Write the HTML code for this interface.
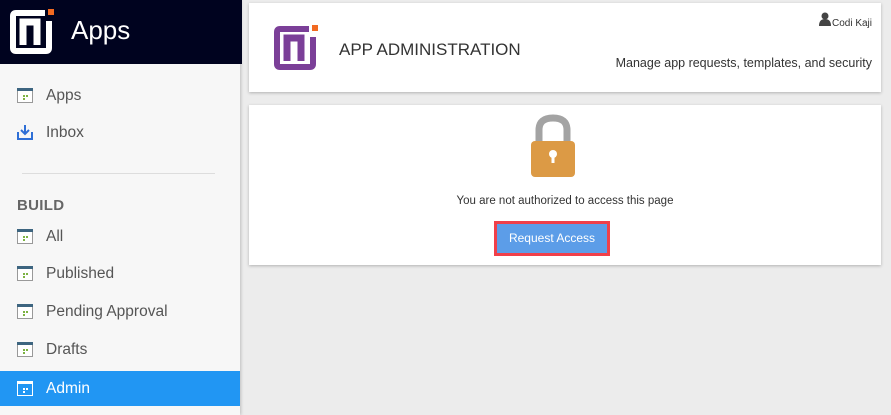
<!DOCTYPE html>
<html><head><meta charset="utf-8"><style>
*{margin:0;padding:0;box-sizing:border-box}
body{width:891px;height:415px;overflow:hidden;background:#ececec;font-family:"Liberation Sans",sans-serif;position:relative}
.side{position:absolute;left:0;top:0;width:240px;height:415px;background:#f7f7f7;box-shadow:1px 0 3px rgba(0,0,0,.2)}
.top{position:absolute;left:0;top:0;width:242px;height:64px;background:#00031f}
.top .t{position:absolute;left:71px;top:15px;color:#fff;font-size:26px}
.item{position:absolute;left:0;width:240px;height:35px;color:#555;font-size:15.5px}
.item span{position:absolute;left:46px;top:9px}
.item svg{position:absolute;left:17px;top:9px}
.sel{background:#2196f3;color:#fff}
.card{position:absolute;left:249px;width:632px;background:#fff;box-shadow:0 1px 3px rgba(0,0,0,.25)}
</style></head><body>
<div class="side">
<div class="top">
<svg width="46" height="48" style="position:absolute;left:8px;top:7px" viewBox="0 0 46 48">
<path d="M37 6 H8 Q5 6 5 9 V41 Q5 44 8 44 H38 Q41 44 41 41 V14" fill="none" stroke="#fff" stroke-width="6"/>
<path d="M15 38 V15 H29 V38" fill="none" stroke="#fff" stroke-width="7"/>
<rect x="40" y="2" width="6" height="6" fill="#f26a21"/>
</svg>
<div class="t">Apps</div></div>
<div class="item" style="top:78px"><svg width="16" height="16"><rect x="0.5" y="1.5" width="15" height="14" fill="#fff" stroke="#999"/><rect x="0" y="1" width="16" height="3" fill="#3d6580"/><rect x="6" y="8" width="2" height="2" fill="#7cb342"/><rect x="9" y="8" width="2" height="2" fill="#7cb342"/><rect x="6" y="11" width="2" height="2" fill="#7cb342"/></svg><span>Apps</span></div>
<div class="item" style="top:115px"><svg width="16" height="16"><path d="M1 8 V15 H15 V8" fill="none" stroke="#2f6fd6" stroke-width="2"/><path d="M8 1 V10 M4 6 L8 10 L12 6" fill="none" stroke="#2f6fd6" stroke-width="2"/></svg><span>Inbox</span></div>
<div style="position:absolute;left:22px;top:173px;width:193px;height:1px;background:#ddd"></div>
<div style="position:absolute;left:17px;top:197px;font-size:15px;color:#666;font-weight:bold;letter-spacing:.3px">BUILD</div>
<div class="item" style="top:219px"><svg width="16" height="16"><rect x="0.5" y="1.5" width="15" height="14" fill="#fff" stroke="#999"/><rect x="0" y="1" width="16" height="3" fill="#3d6580"/><rect x="6" y="8" width="2" height="2" fill="#7cb342"/><rect x="9" y="8" width="2" height="2" fill="#7cb342"/><rect x="6" y="11" width="2" height="2" fill="#7cb342"/></svg><span>All</span></div>
<div class="item" style="top:256px"><svg width="16" height="16"><rect x="0.5" y="1.5" width="15" height="14" fill="#fff" stroke="#999"/><rect x="0" y="1" width="16" height="3" fill="#3d6580"/><rect x="6" y="8" width="2" height="2" fill="#7cb342"/><rect x="9" y="8" width="2" height="2" fill="#7cb342"/><rect x="6" y="11" width="2" height="2" fill="#7cb342"/></svg><span>Published</span></div>
<div class="item" style="top:294px"><svg width="16" height="16"><rect x="0.5" y="1.5" width="15" height="14" fill="#fff" stroke="#999"/><rect x="0" y="1" width="16" height="3" fill="#3d6580"/><rect x="6" y="8" width="2" height="2" fill="#7cb342"/><rect x="9" y="8" width="2" height="2" fill="#7cb342"/><rect x="6" y="11" width="2" height="2" fill="#7cb342"/></svg><span>Pending Approval</span></div>
<div class="item" style="top:332px"><svg width="16" height="16"><rect x="0.5" y="1.5" width="15" height="14" fill="#fff" stroke="#999"/><rect x="0" y="1" width="16" height="3" fill="#3d6580"/><rect x="6" y="8" width="2" height="2" fill="#7cb342"/><rect x="9" y="8" width="2" height="2" fill="#7cb342"/><rect x="6" y="11" width="2" height="2" fill="#7cb342"/></svg><span>Drafts</span></div>
<div class="item sel" style="top:371px"><svg width="16" height="16"><rect x="0.5" y="1.5" width="15" height="14" fill="none" stroke="#fff"/><rect x="0" y="1" width="16" height="3" fill="#fff"/><rect x="6" y="8" width="2" height="2" fill="#fff"/><rect x="9" y="8" width="2" height="2" fill="#fff"/><rect x="6" y="11" width="2" height="2" fill="#fff"/></svg><span>Admin</span></div>
</div>
<div class="card" style="top:3px;height:89px">
<svg width="46" height="48" style="position:absolute;left:23px;top:20px" viewBox="0 0 46 48">
<path d="M37 6 H8 Q5 6 5 9 V41 Q5 44 8 44 H38 Q41 44 41 41 V14" fill="none" stroke="#7b3f98" stroke-width="6"/>
<path d="M15 38 V15 H29 V38" fill="none" stroke="#7b3f98" stroke-width="7"/>
<rect x="40" y="2" width="6" height="6" fill="#f26a21"/>
</svg>
<div style="position:absolute;left:90px;top:37px;font-size:17px;color:#333">APP ADMINISTRATION</div>
<svg width="12" height="14" style="position:absolute;left:570px;top:9px" viewBox="0 0 12 14"><circle cx="6" cy="4" r="3.5" fill="#444"/><path d="M0 14 Q0 7 6 7 Q12 7 12 14Z" fill="#444"/></svg>
<div style="position:absolute;right:9px;top:15px;font-size:10px;color:#333">Codi Kaji</div>
<div style="position:absolute;right:9px;top:53px;font-size:12.5px;color:#333">Manage app requests, templates, and security</div>
</div>
<div class="card" style="top:105px;height:160px">
<svg width="46" height="64" style="position:absolute;left:281px;top:9px" viewBox="0 0 46 64">
<path d="M9 32 V16 Q9 4 23 4 Q37 4 37 16 V32" fill="none" stroke="#a3a3a3" stroke-width="7"/>
<rect x="1" y="27" width="44" height="36" rx="4" fill="#dc9a45"/>
<circle cx="23" cy="40" r="4" fill="#fff"/><rect x="21.5" y="40" width="3" height="9" fill="#fff"/>
</svg>
<div style="position:absolute;left:0;width:100%;top:90px;text-align:center;font-size:11.5px;color:#333">You are not authorized to access this page</div>
<div style="position:absolute;left:245px;top:116px;width:116px;height:35px;border:3px solid #f0404a;background:#5c9de8;color:#fff;font-size:12px;text-align:center;line-height:29px">Request Access</div>
</div>
</body></html>
